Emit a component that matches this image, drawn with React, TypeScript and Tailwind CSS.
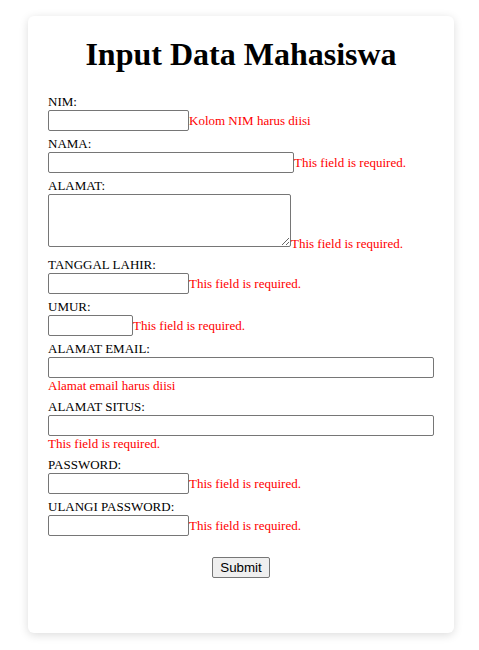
const serif = { fontFamily: '"Liberation Serif", "Times New Roman", serif' };

type FieldProps = {
  label: string;
  width: string;
  error: string;
  below?: boolean;
  type?: string;
};

const Field = ({ label, width, error, below, type = "text" }: FieldProps) => {
  const inputCls = `h-[21px] ${width} shrink-0 rounded-[2px] border border-[#767676] bg-white px-[2px] text-[13.33px] outline-none`;
  if (below) {
    return (
      <div className="mb-[6px]">
        <label className="block h-[15px] leading-[15px]">{label}</label>
        <div className="mt-px">
          <input type={type} className={inputCls} />
        </div>
        <span className="block h-[15px] leading-[15px] text-[#ff0000]">{error}</span>
      </div>
    );
  }
  return (
    <div className="mb-[5px]">
      <label className="block h-[15px] leading-[15px]">{label}</label>
      <div className="mt-px flex items-center">
        <input type={type} className={inputCls} />
        <span className="whitespace-nowrap leading-[15px] text-[#ff0000]">{error}</span>
      </div>
    </div>
  );
};

export default function App() {
  return (
    <div className="min-h-screen bg-white pt-[16px] text-black" style={serif}>
      <div className="ml-[28px] w-[426px] rounded-[6px] bg-white px-[20px] pt-[20px] pb-[20px] shadow-[0_2px_10px_rgba(0,0,0,0.14)]">
        <h1 className="mb-[22px] text-center text-[32px] font-bold leading-[36px]">
          Input Data Mahasiswa
        </h1>

        <form className="text-[13px]" onSubmit={(e) => e.preventDefault()}>
          <Field label="NIM:" width="w-[141px]" error="Kolom NIM harus diisi" />
          <Field label="NAMA:" width="w-[246px]" error="This field is required." />

          <div className="mb-[10px]">
            <label className="block h-[15px] leading-[15px]">ALAMAT:</label>
            <div className="mt-px flex items-end">
              <textarea className="h-[53px] w-[243px] shrink-0 resize rounded-[2px] border border-[#767676] bg-white text-[13.33px] outline-none" />
              <span className="-mb-[4px] whitespace-nowrap leading-[15px] text-[#ff0000]">
                This field is required.
              </span>
            </div>
          </div>

          <Field label="TANGGAL LAHIR:" width="w-[141px]" error="This field is required." />
          <Field label="UMUR:" width="w-[85px]" error="This field is required." type="number" />
          <Field label="ALAMAT EMAIL:" width="w-[386px]" error="Alamat email harus diisi" below />
          <Field label="ALAMAT SITUS:" width="w-[386px]" error="This field is required." below />
          <Field label="PASSWORD:" width="w-[141px]" error="This field is required." type="password" />
          <Field label="ULANGI PASSWORD:" width="w-[141px]" error="This field is required." type="password" />

          <div className="mt-[21px] mb-[35px] flex justify-center">
            <button
              type="submit"
              className="h-[21px] rounded-[2px] border border-[#767676] bg-[#efefef] px-[7px] text-[13.33px] leading-[15px]"
              style={{ fontFamily: '"Liberation Sans", Arial, sans-serif' }}
            >
              Submit
            </button>
          </div>
        </form>
      </div>
    </div>
  );
}
